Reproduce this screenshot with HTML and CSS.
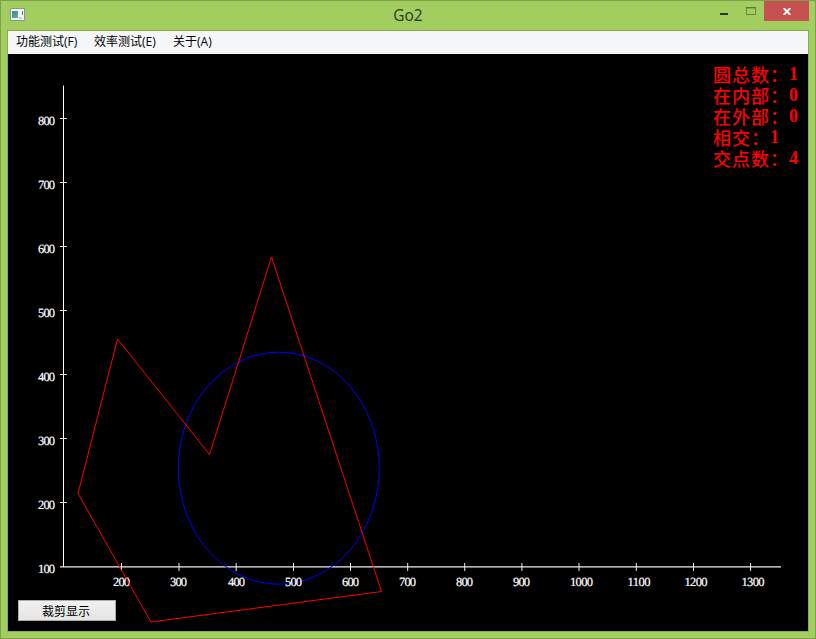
FILE: index.html
```
<!DOCTYPE html>
<html lang="zh-CN">
<head>
<meta charset="utf-8">
<title>Go2</title>
<link rel="stylesheet" href="styles.css">
</head>
<body>
<div class="window">
  <header class="titlebar">
    <svg class="app-icon" width="17" height="14" viewBox="0 0 17 14">
      <defs><linearGradient id="pane" x2="1" y2="1"><stop stop-color="#3e7fae"/><stop offset="1" stop-color="#5fb38a"/></linearGradient></defs>
      <path d="M.5 .5h14v12H.5z" fill="#f4f6f8" stroke="#87968a"/>
      <rect x="2" y="3" width="6" height="7" fill="url(#pane)"/>
      <rect x="9" y="9" width="3" height="2" fill="#c8cdd2"/>
      <rect x="12" y="3" width="1" height="4" fill="#3979ad"/>
    </svg>
    <h1 class="title">Go2</h1>
    <div class="controls">
      <span class="control minimize"><svg width="8" height="2"><rect width="8" height="2" fill="#29321b"/></svg></span>
      <span class="control maximize"><svg width="10" height="8"><rect x=".5" y="1" width="9" height="6.5" fill="none" stroke="#6a8742"/><path d="M0 .5h10" stroke="#5c783a"/></svg></span>
      <span class="control close"><svg width="8" height="7" viewBox="0 0 8 7"><path d="M.7 0 7.3 7M7.3 0 .7 7" stroke="#fff" stroke-width="1.9"/></svg></span>
    </div>
  </header>
  <main class="client">
    <nav class="menu"><span class="menu-functions">功能测试(F)</span><span class="menu-speed">效率测试(E)</span><span>关于(A)</span></nav>
    <section class="stage">
      <svg class="plot" width="800" height="577" viewBox="8 54 800 577">
        <path d="M60 566.5H781" stroke="#b5b5b5"/>
        <path d="M60 567.5H781" stroke="#777"/>
        <path d="M63.5 85.500V567" stroke="#fff"/>
        <path d="M60 118.500h7M60 182.500h7M60 246.500h7M60 310.500h7M60 374.500h7M60 438.500h7M60 502.500h7" stroke="#ddd"/>
        <path d="M121.500 563v8M179 563v8M236.200 563v8M293.500 563v8M350.500 563v8M407.700 563v8M464.700 563v8M521.900 563v8M579 563v8M636.300 563v8M693.500 563v8M750.600 563v8" stroke="#eee"/>
        <ellipse cx="278.800" cy="468.200" rx="100.500" ry="116" fill="none" stroke="#00f"/>
        <g class="ticks">
          <text x="38" y="125" textLength="17">800</text><text x="38" y="189" textLength="17">700</text>
          <text x="38" y="253" textLength="17">600</text><text x="38" y="317" textLength="17">500</text>
          <text x="38" y="381" textLength="17">400</text><text x="38" y="445" textLength="17">300</text>
          <text x="38" y="509" textLength="17">200</text><text x="38" y="573" textLength="17">100</text>
          <text x="113" y="586" textLength="17">200</text><text x="170" y="586" textLength="17">300</text>
          <text x="228" y="586" textLength="17">400</text><text x="285" y="586" textLength="17">500</text>
          <text x="342" y="586" textLength="17">600</text><text x="399" y="586" textLength="17">700</text>
          <text x="456" y="586" textLength="17">800</text><text x="513" y="586" textLength="17">900</text>
          <text x="570" y="586" textLength="23">1000</text><text x="627.500" y="586" textLength="23">1100</text>
          <text x="684.500" y="586" textLength="23">1200</text><text x="741.500" y="586" textLength="23">1300</text>
        </g>
        <path d="M117.500 339 209.500 454.500 271.500 257 381.500 591.500 151 622 78 493.500Z" fill="none" stroke="#f00"/>
      </svg>
      <div class="stats">
        <p>圆总数：<b>1</b></p><p>在内部：<b>0</b></p><p>在外部：<b>0</b></p><p>相交：<b>1</b></p><p>交点数：<b>4</b></p>
      </div>
      <button class="clip">裁剪显示</button>
    </section>
  </main>
</div>
</body>
</html>
```
FILE: styles.css
```
* { box-sizing: border-box; }
body { margin: 0; overflow: hidden; }
p, h1 { margin: 0; }
.window {
  width: 816px;
  height: 639px;
  padding: 0 6px 6px;
  background: #a2cd5f;
  border: 1px solid #7f9f4b;
  font-family: "Open Sans", "Noto Sans CJK SC", sans-serif;
}
.titlebar {
  display: grid;
  grid-template-columns: 1fr auto 1fr;
  height: 29px;
}
.app-icon { margin: 7px 0 0 3px; overflow: visible; }
.title {
  font: 15.5px/29px "Open Sans", sans-serif;
  color: #2c3421;
}
.controls { display: flex; justify-content: flex-end; }
.control { display: flex; height: 20px; }
.minimize { width: 26px; padding-top: 12px; }
.maximize { width: 18px; padding-top: 6px; }
.close {
  width: 45px;
  align-items: center;
  justify-content: center;
  background: #c75050;
  padding-top: 1px;
}
.client {
  width: 802px;
  height: 602px;
  border: 1px solid #88ad50;
}
.menu {
  display: flex;
  height: 23px;
  padding-left: 8px;
  background: #f5f6f7;
  color: #000;
  font-size: 12px;
  line-height: 22px;
  white-space: nowrap;
}
.menu-functions { width: 78px; }
.menu-speed { width: 79px; }
.stage { position: relative; height: 577px; background: #000; }
.plot { display: block; }
.ticks { fill: #fff; font: 12.5px "Liberation Serif", serif; stroke: #fff; stroke-width: .2px; }
.ticks text { text-rendering: geometricPrecision; }
.stats {
  position: absolute;
  left: 705px;
  top: 10px;
  color: #f00;
  font: 500 18px/21px "Noto Sans CJK SC", sans-serif;
  letter-spacing: 1px;
}
.stats p { display: flex; height: 21px; white-space: nowrap; }
.stats b { font: bold 18px/21px "Liberation Serif", serif; }
.clip {
  position: absolute;
  left: 10px;
  top: 546px;
  width: 98px;
  height: 21px;
  padding: 0 2px 0 0;
  border: 1px solid #acacac;
  background: linear-gradient(#f0f0f0, #e5e5e5);
  color: #000;
  font: 12px/17px "Noto Sans CJK SC", sans-serif;
}
```
